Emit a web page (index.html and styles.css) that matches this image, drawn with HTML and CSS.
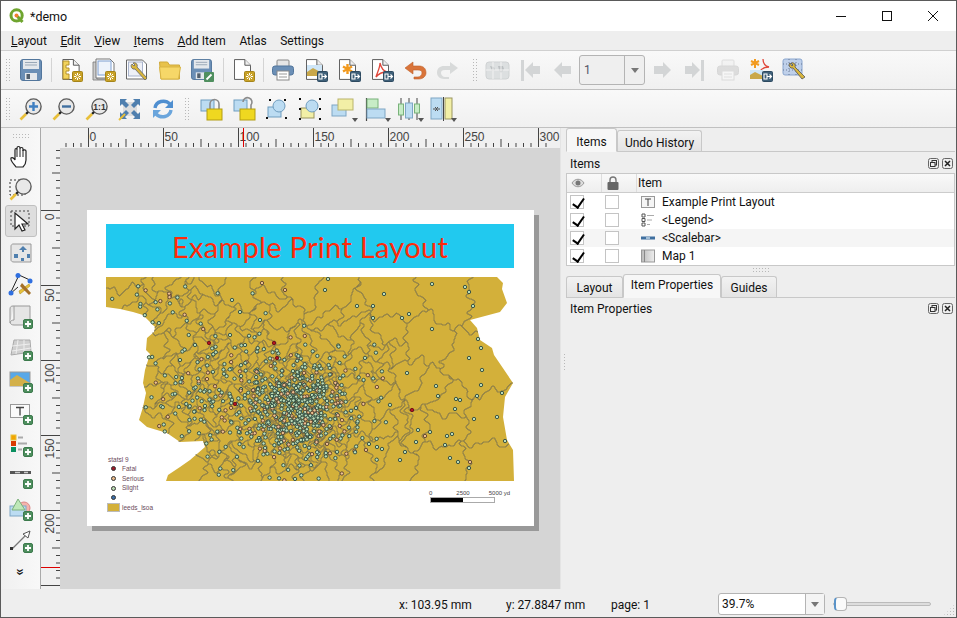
FILE: index.html
```html
<!DOCTYPE html>
<html lang="en">
<head>
    <meta charset="UTF-8">
    <meta name="viewport" content="width=device-width, initial-scale=1.0">
    <title>*demo</title>
    <link rel="stylesheet" href="styles.css">
</head>
<body>
    <svg class="defs" width="0" height="0">
        <symbol id="plus" viewBox="0 0 10 10"><rect x=".5" y=".5" width="9" height="9" rx="1.5" fill="#4f8f5f" stroke="#3c7a4c"/><path d="M5 2v6M2 5h6" stroke="#fff" stroke-width="1.8"/></symbol>
        <symbol id="gear" viewBox="0 0 11 11"><rect x=".5" y=".5" width="10" height="10" rx="1" fill="#c9a227" stroke="#a5841a"/><path d="M5.5 2v7M2 5.5h7M3 3l5 5M8 3l-5 5" stroke="#fff" stroke-width="1"/><circle cx="5.5" cy="5.5" r="1.3" fill="#c9a227"/></symbol>
        <symbol id="out" viewBox="0 0 11 11"><rect x=".5" y=".5" width="10" height="10" rx="1" fill="#3f6079" stroke="#2e4a60"/><path d="M2 3h3v5H2zM5.5 5.5H9M7.5 3.5l2 2-2 2" fill="none" stroke="#fff" stroke-width="1.1"/></symbol>
        <symbol id="mag" viewBox="0 0 24 24"><circle cx="14.5" cy="9.5" r="7.6" fill="#e8e8e8" stroke="#5c5c5c" stroke-width="1.4"/><path d="M9 15 7 17" stroke="#222" stroke-width="2.4"/><path d="M7 17 1.5 22.5" stroke="#e8bf3a" stroke-width="2.6"/></symbol>
        <symbol id="doc" viewBox="0 0 18 22"><path d="M.5.5h11l6 6v15H.5z" fill="#fff" stroke="#555"/><path d="M11.5.5v6h6" fill="#eee" stroke="#555"/></symbol>
        <symbol id="disk" viewBox="0 0 22 22"><rect x=".5" y=".5" width="21" height="21" rx="2.5" fill="#6b8fb6" stroke="#52769c"/><rect x="3" y="1" width="16" height="9" fill="#e4e8ec"/><path d="M5 3.5h12M5 6h12" stroke="#9aa9b8"/><rect x="5" y="14" width="12" height="7" fill="#e4e8ec"/><rect x="6.5" y="15" width="3.5" height="5" fill="#52606e"/></symbol>
        <symbol id="printer" viewBox="0 0 22 22"><rect x="5" y="1" width="12" height="7" rx="1" fill="#e6e6e6" stroke="#888"/><rect x=".5" y="7" width="21" height="9" rx="2.5" fill="#6b8fb6" stroke="#52769c"/><rect x="5" y="12" width="12" height="9" fill="#fff" stroke="#888"/><path d="M7 15h8M7 18h8" stroke="#999"/></symbol>
        <symbol id="boxes" viewBox="0 0 24 24"><rect x="1" y="8" width="14" height="11" fill="#bcdcf2" stroke="#7ea6c4"/><rect x="7" y="2" width="15" height="11" fill="#f2efa6" stroke="#b9b46a"/></symbol>
    </svg>

    <div class="window">
        <header class="titlebar">
            <svg class="logo" viewBox="0 0 16 16" width="16" height="16">
                <circle cx="7.6" cy="7.4" r="5.6" fill="none" stroke="#6fa52f" stroke-width="3"/>
                <path d="M8.5 8.5 13.5 14" stroke="#6fa52f" stroke-width="3"/>
                <circle cx="7.5" cy="7.5" r="2" fill="#ee7f2f"/>
            </svg>
            <span class="doc-name">*demo</span>
            <div class="win-btns">
                <svg viewBox="0 0 12 12" width="12" height="12"><path d="M1 6.5h10" stroke="#111"/></svg>
                <svg viewBox="0 0 12 12" width="12" height="12"><rect x="1.5" y="1.5" width="9" height="9" fill="none" stroke="#111"/></svg>
                <svg viewBox="0 0 12 12" width="12" height="12"><path d="M1 1l10 10M11 1 1 11" stroke="#111"/></svg>
            </div>
        </header>

        <nav class="menubar">
            <span><u>L</u>ayout</span>
            <span><u>E</u>dit</span>
            <span><u>V</u>iew</span>
            <span><u>I</u>tems</span>
            <span><u>A</u>dd Item</span>
            <span>Atlas</span>
            <span>Settings</span>
        </nav>

        <div class="toolbar tb-one">
            <i class="handle"></i>
            <div class="tool"><svg viewBox="0 0 24 24"><use href="#disk" x="1" y="1" width="22" height="22"/></svg></div>
            <i class="sep"></i>
            <div class="tool"><svg viewBox="0 0 24 24"><use href="#doc" x="3" y="1" width="18" height="21"/><path d="M4 3h6v4H7v3h3v3H7v3h3v5H4z" fill="#f2d35c" stroke="#b3912c"/><use href="#gear" x="13" y="13" width="11" height="11"/></svg></div>
            <div class="tool"><svg viewBox="0 0 24 24"><path d="M1 4h4v17h14v1H1z" fill="#ccc" stroke="#777" stroke-width=".8"/><path d="M4 1h14l4 4v15H4z" fill="#fff" stroke="#777"/><rect x="6" y="3" width="13" height="14" fill="#eef3fb" stroke="#7c9ed0"/><use href="#gear" x="13" y="13" width="11" height="11"/></svg></div>
            <div class="tool"><svg viewBox="0 0 24 24"><path d="M1.500 2h16l4 4v15h-20z" fill="#fff" stroke="#666"/><rect x="3.500" y="4" width="14" height="14" fill="#eef0f6" stroke="#a9b4cc"/><path d="M7 6a3 3 0 0 0 3 5l10 11 2-2-10-11a3 3 0 0 0-4-4l2 2-1 1z" fill="#d9b63c" stroke="#666" stroke-width=".8"/></svg></div>
            <div class="tool"><svg viewBox="0 0 24 24"><path d="M1.500 4h8l2 3h10v14H3z" fill="#e8c24b" stroke="#cfa93a"/><path d="M1.500 9h21l-2 12H3z" fill="#f6d768" stroke="#d9b545"/></svg></div>
            <div class="tool"><svg viewBox="0 0 24 24"><use href="#disk" x="0" y="1" width="21" height="21"/><rect x="13" y="14" width="10" height="10" rx="1" fill="#4f8f5f"/><path d="M15.500 21.500l5-5" stroke="#fff" stroke-width="1.800"/></svg></div>
            <i class="sep"></i>
            <div class="tool"><svg viewBox="0 0 24 24"><use href="#doc" x="3" y="1" width="17" height="21"/><use href="#gear" x="13" y="13" width="11" height="11"/></svg></div>
            <i class="sep"></i>
            <div class="tool"><svg viewBox="0 0 24 24"><use href="#printer" x="1" y="1" width="22" height="22"/></svg></div>
            <div class="tool"><svg viewBox="0 0 24 24"><use href="#doc" x="2" y="1" width="17" height="21"/><rect x="3" y="7" width="15" height="11" fill="#cfe6f7"/><path d="M3 18v-4l6-4 9 5v3z" fill="#c9a84a"/><use href="#out" x="13" y="13" width="11" height="11"/></svg></div>
            <div class="tool"><svg viewBox="0 0 24 24"><use href="#doc" x="2" y="1" width="17" height="21"/><path d="M10.500 6v10M6 8.500l9 5M15 8.500l-9 5" stroke="#f29a1f" stroke-width="2.400"/><use href="#out" x="13" y="13" width="11" height="11"/></svg></div>
            <div class="tool"><svg viewBox="0 0 24 24"><use href="#doc" x="2" y="1" width="17" height="21"/><path d="M10 5c1 4 3 8 7 9-4 0-8 1-11 5 1-4 4-9 4-14z" fill="none" stroke="#e0473a" stroke-width="1.300"/><use href="#out" x="13" y="13" width="11" height="11"/></svg></div>
            <div class="tool"><svg viewBox="0 0 24 24"><path d="M10 4 2 10l8 6v-4h5c3 0 4 1 4 3 0 2-2 4-4 4h-4v2h5c4 0 7-3 7-6 0-5-3-7-7-7h-6z" fill="#d9743a" stroke="#c05f28" stroke-width=".6"/></svg></div>
            <div class="tool"><svg viewBox="0 0 24 24"><path d="M14 4l8 6-8 6v-4H9c-3 0-4 1-4 3 0 2 2 4 4 4h4v2H8c-4 0-7-3-7-6 0-5 3-7 7-7h6z" fill="#d8dada"/></svg></div>
            <i class="handle handle-mid"></i>
            <div class="tool"><svg viewBox="0 0 24 24"><rect x="1" y="4" width="23" height="17" rx="3" fill="#dcdfe0" stroke="#cfd2d3"/><path d="M5 8l4 1 1 3-3 1zM13 8l5 0 1 3-3 4-2-3z" fill="#bcc0c2"/><path d="M1 12h23M8 4v17M16 4v17" stroke="#f2f2f2"/></svg></div>
            <div class="tool"><svg viewBox="0 0 24 24" fill="#d3d5d6"><rect x="3" y="2" width="3" height="21"/><path d="M7 12l8-8v4h7v8h-7v4z"/></svg></div>
            <div class="tool"><svg viewBox="0 0 24 24" fill="#d3d5d6"><path d="M3 12l8-8v4h9v8h-9v4z"/></svg></div>
            <div class="page-box"><span class="page-val">1</span><span class="page-drop"><b></b></span></div>
            <div class="tool"><svg viewBox="0 0 24 24" fill="#d3d5d6"><path d="M21 12l-8-8v4H4v8h9v4z"/></svg></div>
            <div class="tool"><svg viewBox="0 0 24 24" fill="#d3d5d6"><rect x="18" y="2" width="3" height="21"/><path d="M17 12l-8-8v4H2v8h7v4z"/></svg></div>
            <div class="tool is-faded"><svg viewBox="0 0 24 24"><use href="#printer" x="1" y="1" width="22" height="22"/></svg></div>
            <div class="tool"><svg viewBox="0 0 24 24"><path d="M6 1v9M2 3l8 4M10 3 2 7" stroke="#f29a1f" stroke-width="2"/><path d="M14 1c0 4 2 7 6 8-4 0-7 1-9 4" fill="none" stroke="#e0473a" stroke-width="1.300"/><rect x="1" y="12" width="13" height="9" fill="#cfe6f7"/><path d="M1 21v-4l5-3 8 4v3z" fill="#c9a84a"/><use href="#out" x="13" y="13" width="11" height="11"/></svg></div>
            <div class="tool"><svg viewBox="0 0 24 24"><rect x="1" y="1" width="19" height="16" rx="2" fill="#bfd0ea" stroke="#8aa6cf"/><path d="M1 6h19M1 12h19M7 1v16M14 1v16" stroke="#5a6b85" stroke-dasharray="1 2" stroke-width=".8"/><path d="M8 5a3 3 0 0 0 3 5l9 11 3-2-10-10a3 3 0 0 0-4-4l2 2-1 1z" fill="#d9b63c" stroke="#555" stroke-width=".8"/></svg></div>
        </div>

        <div class="toolbar tb-two">
            <i class="handle"></i>
            <div class="tool"><svg viewBox="0 0 24 24"><use href="#mag" width="24" height="24"/><path d="M14.500 5v9M10 9.500h9" stroke="#3f7fc1" stroke-width="2.400"/></svg></div>
            <div class="tool"><svg viewBox="0 0 24 24"><use href="#mag" width="24" height="24"/><path d="M10 9.500h9" stroke="#3f6f9f" stroke-width="2.400"/></svg></div>
            <div class="tool"><svg viewBox="0 0 24 24"><use href="#mag" width="24" height="24"/><text x="14.500" y="12.500" class="one-one">1:1</text></svg></div>
            <div class="tool"><svg viewBox="0 0 24 24"><rect x="5" y="5" width="14" height="14" fill="#ddd"/><path d="M2 2h7L7 4l4 4-3 3-4-4-2 2zM22 2h-7l2 2-4 4 3 3 4-4 2 2zM2 22h7l-2-2 4-4-3-3-4 4-2-2zM22 22h-7l2-2-4-4 3-3 4 4 2-2z" fill="#4f7fae"/><path d="M1 23l6-6" stroke="#e8bf3a" stroke-width="2"/></svg></div>
            <div class="tool"><svg viewBox="0 0 24 24" fill="none" stroke-width="3.400"><path d="M4 11c1-7 10-9 15-4" stroke="#4f8fd0"/><path d="M22 3v8h-8z" fill="#4f8fd0"/><path d="M20 13c-1 7-10 9-15 4" stroke="#6aa5dc"/><path d="M2 21v-8h8z" fill="#6aa5dc"/></svg></div>
            <i class="handle handle-two"></i>
            <div class="tool"><svg viewBox="0 0 24 24"><rect x="2" y="3" width="13" height="11" fill="#bcdcf2" stroke="#6f9dbf"/><path d="M11 13V7a4.500 4.500 0 0 1 9 0v6" fill="none" stroke="#8b8b8b" stroke-width="1.600"/><rect x="8" y="12" width="15" height="11" fill="#efd820" stroke="#b39d12"/></svg></div>
            <div class="tool"><svg viewBox="0 0 24 24"><rect x="2" y="3" width="13" height="11" fill="#bcdcf2" stroke="#6f9dbf"/><path d="M11 5a4.500 4.500 0 1 1 8 3v4" fill="none" stroke="#8b8b8b" stroke-width="1.600"/><rect x="8" y="12" width="15" height="11" fill="#efd820" stroke="#b39d12"/></svg></div>
            <div class="tool"><svg viewBox="0 0 24 24"><rect x="3" y="10" width="13" height="10" fill="#bcdcf2" stroke="#6f9dbf"/><circle cx="14" cy="9" r="6" fill="#bcdcf2" stroke="#6f9dbf"/><path d="M1 20h2v2H1zM20 20h2v2h-2zM4 2h2v2H4zM19 2h2v2h-2z" fill="#111"/></svg></div>
            <div class="tool"><svg viewBox="0 0 24 24"><rect x="3" y="11" width="13" height="10" fill="#f2efa6" stroke="#9a9560"/><circle cx="14" cy="9" r="6" fill="#bcdcf2" stroke="#6f9dbf"/><path d="M1 1h2v2H1zM21 1h2v2h-2zM1 11h2v2H1zM21 11h2v2h-2zM1 21h2v2H1zM21 21h2v2h-2z" fill="#111"/></svg></div>
            <div class="tool has-drop"><svg viewBox="0 0 24 24"><use href="#boxes" width="24" height="24"/></svg></div>
            <div class="tool has-drop"><svg viewBox="0 0 24 24"><path d="M2.500 1v23" stroke="#444" stroke-width="1.200"/><rect x="3" y="2" width="11" height="9" fill="#c7ecc6" stroke="#79b27a"/><rect x="3" y="12" width="18" height="9" fill="#bcdcf2" stroke="#7ea6c4"/></svg></div>
            <div class="tool has-drop"><svg viewBox="0 0 24 24"><path d="M4 1v22M12 1v22M20 1v22" stroke="#444"/><rect x="1.500" y="7" width="5" height="11" fill="#c7ecc6" stroke="#79b27a"/><rect x="8.500" y="6" width="7" height="15" fill="#bcdcf2" stroke="#7ea6c4"/><rect x="17.500" y="7" width="5" height="9" fill="#c7ecc6" stroke="#79b27a"/></svg></div>
            <div class="tool has-drop"><svg viewBox="0 0 24 24"><rect x="1" y="1" width="11" height="21" fill="#bcdcf2" stroke="#7ea6c4"/><rect x="15" y="1" width="7" height="21" fill="#f2efa6" stroke="#9a9560"/><path d="M3 12h3M10 12H7M5 10l2 2-2 2M8 10l-2 2 2 2" stroke="#555" fill="none"/><path d="M13.500 0v24" stroke="#444"/></svg></div>
        </div>

        <main class="workspace">
            <aside class="side-tools">
                <i class="handle-h"></i>
                <div class="side-tool"><svg viewBox="0 0 24 24"><path d="M7 22c-2-3-6-6-5-9 1-1 3 0 4 2V5c0-2 2-2 2 0V3c0-2 3-2 3 0v1c0-2 3-2 3 0v2c0-2 3-1 3 0v9c0 3-1 5-3 7z" fill="#fff" stroke="#222" stroke-width="1.200"/><path d="M8 5v7M11 4v8M14 5v7" stroke="#222"/></svg></div>
                <div class="side-tool"><svg viewBox="0 0 24 24"><rect x="1" y="3" width="15" height="15" fill="none" stroke="#333" stroke-dasharray="2 2"/><use href="#mag" x="0" y="0" width="24" height="24"/></svg></div>
                <div class="side-tool is-on"><svg viewBox="0 0 24 24"><rect x="2" y="2" width="18" height="15" fill="none" stroke="#444" stroke-dasharray="2 2"/><path d="M6 4v16l4-4 3 6 3-1-3-6h6z" fill="#fff" stroke="#222" stroke-width="1.200"/></svg></div>
                <div class="side-tool"><svg viewBox="0 0 24 24"><path d="M4 3h18v18H5c-2 0-3-1-3-2V5c0-1 1-2 2-2z" fill="#e6e6e6" stroke="#999"/><path d="M14 5l4 4h-3v2h-2V9h-3zM5 13h4v4H5zM18 13h3v4h-3zM12 17h3v3h-3z" fill="#4f7fae"/></svg></div>
                <div class="side-tool"><svg viewBox="0 0 24 24"><path d="M10 2 1 21l8-7" fill="none" stroke="#222"/><path d="M10 2l13 6" stroke="#222"/><circle cx="9" cy="2.500" r="2.500" fill="#2f6fe0"/><circle cx="21" cy="8" r="2.500" fill="#2f6fe0"/><circle cx="2" cy="20" r="2.500" fill="#2f6fe0"/><path d="M10 18l10-7 1 2-10 8z" fill="#e8c23a" stroke="#b08f22" stroke-width=".6"/><path d="M13 10l9 10-2 2-9-9z" fill="#a4702a"/></svg></div>
                <div class="side-tool"><svg viewBox="0 0 24 24"><path d="M4 1h17v19H5c-2 0-4-1-4-3V4c0-2 1-3 3-3z" fill="#e5e5e5" stroke="#999"/><path d="M5 1v14c-2 0-4 1-4 3" fill="#f4f4f4" stroke="#999"/><use href="#plus" x="14" y="14" width="10" height="10"/></svg></div>
                <div class="side-tool"><svg viewBox="0 0 24 24"><path d="M5 3h16l1 12-20 3z" fill="#cfcfcf" stroke="#aaa"/><path d="M3 9l18-2M3 14l19-3M9 3l-2 14M15 3l0 12" stroke="#eee"/><use href="#plus" x="14" y="14" width="10" height="10"/></svg></div>
                <div class="side-tool"><svg viewBox="0 0 24 24"><rect x="1" y="3" width="20" height="14" fill="#58a8e8" stroke="#999"/><path d="M1 17v-6l7-5 13 8v3z" fill="#d3b04a"/><use href="#plus" x="14" y="14" width="10" height="10"/></svg></div>
                <div class="side-tool"><svg viewBox="0 0 24 24"><rect x="1.500" y="3.500" width="19" height="13" fill="#fafafa" stroke="#999"/><path d="M7 6.500h8M11 6.500v8" stroke="#444" stroke-width="1.300"/><use href="#plus" x="14" y="14" width="10" height="10"/></svg></div>
                <div class="side-tool"><svg viewBox="0 0 24 24"><rect x="2" y="2" width="5" height="5" fill="#f2a400" stroke="#e8c23a"/><rect x="2" y="8" width="5" height="5" fill="#d93a00"/><rect x="2" y="14" width="5" height="5" fill="#0a8f5f"/><path d="M9 4.500h5M9 10.500h9M9 16.500h4" stroke="#aaa" stroke-width="1.800"/><use href="#plus" x="14" y="14" width="10" height="10"/></svg></div>
                <div class="side-tool"><svg viewBox="0 0 24 24"><rect x="1" y="6" width="21" height="3" fill="#555"/><path d="M6 7.500h5M15 7.500h4" stroke="#ccc" stroke-width="1.400"/><use href="#plus" x="14" y="14" width="10" height="10"/></svg></div>
                <div class="side-tool"><svg viewBox="0 0 24 24"><circle cx="15" cy="11" r="6" fill="#f3b4ac" stroke="#d88"/><rect x="1" y="9" width="16" height="10" fill="#bcdcf2" stroke="#7ea6c4"/><path d="M9 2l-6 11h13z" fill="#bfe8b8" stroke="#7cb07c"/><use href="#plus" x="14" y="14" width="10" height="10"/></svg></div>
                <div class="side-tool"><svg viewBox="0 0 24 24"><path d="M3 20 19 4" stroke="#777" stroke-width="1.200"/><rect x="1" y="18" width="3" height="3" fill="#333"/><path d="M14 5l7-3-2 7z" fill="#fff" stroke="#555"/><use href="#plus" x="14" y="14" width="10" height="10"/></svg></div>
                <div class="side-more">»</div>
            </aside>

            <section class="layout-view">
                <div class="ruler-corner"></div>
                <svg class="ruler ruler-h" id="ruler-h" width="500" height="20"></svg>
                <svg class="ruler ruler-v" id="ruler-v" width="19" height="441"></svg>
                <div class="canvas">
                    <div class="page">
                        <div class="banner">Example Print Layout</div>
                        <svg class="map" id="map" width="408" height="204" viewBox="106 277 408 204"></svg>
                        <div class="legend">
                            <div class="lg-title">statsl 9</div>
                            <div class="lg-row"><i class="lg-dot dot-fatal"></i>Fatal</div>
                            <div class="lg-row"><i class="lg-dot dot-serious"></i>Serious</div>
                            <div class="lg-row"><i class="lg-dot dot-slight"></i>Slight</div>
                            <div class="lg-row"><i class="lg-dot dot-other"></i></div>
                            <div class="lg-row lg-area"><i class="lg-swatch"></i>leeds_lsoa</div>
                        </div>
                        <div class="scalebar">
                            <div class="sb-labels"><span>0</span><span>2500</span><span>5000 yd</span></div>
                            <div class="sb-bar"><i></i></div>
                        </div>
                    </div>
                </div>
            </section>

            <aside class="docks">
                <div class="tabs tabs-top">
                    <div class="tab is-active">Items</div>
                    <div class="tab">Undo History</div>
                </div>
                <div class="dock-head">
                    <span>Items</span>
                    <div class="dock-btns">
                        <svg viewBox="0 0 11 11" width="11" height="11"><rect x=".5" y=".5" width="10" height="10" rx="2" fill="none" stroke="#666"/><rect x="4" y="2.500" width="4.500" height="4.500" fill="none" stroke="#333"/><rect x="2.500" y="4.500" width="4.500" height="4" fill="#eee" stroke="#333"/></svg>
                        <svg viewBox="0 0 11 11" width="11" height="11"><rect x=".5" y=".5" width="10" height="10" rx="2" fill="none" stroke="#666"/><path d="M3 3l5 5M8 3 3 8" stroke="#222" stroke-width="1.500"/></svg>
                    </div>
                </div>
                <div class="items-table">
                    <div class="row row-head">
                        <div class="cell"><svg viewBox="0 0 14 10" width="14" height="10"><path d="M1 5c3-5 9-5 12 0-3 5-9 5-12 0z" fill="#ddd" stroke="#999"/><circle cx="7" cy="5" r="2.500" fill="#777"/></svg></div>
                        <div class="cell"><svg viewBox="0 0 14 14" width="14" height="14"><path d="M4 7V4a3 3 0 0 1 6 0v3" fill="none" stroke="#777" stroke-width="1.400"/><rect x="1.500" y="6" width="11" height="8" rx="1" fill="#666"/></svg></div>
                        <div class="cell cell-name">Item</div>
                    </div>
                    <div class="row">
                        <div class="cell"><i class="check is-checked"></i></div>
                        <div class="cell"><i class="check"></i></div>
                        <div class="cell cell-name"><svg class="row-ico" viewBox="0 0 14 14"><rect x=".5" y="1.500" width="13" height="11" fill="#f5f5f5" stroke="#999"/><path d="M4 4h6M7 4v7" stroke="#444"/></svg>Example Print Layout</div>
                    </div>
                    <div class="row">
                        <div class="cell"><i class="check is-checked"></i></div>
                        <div class="cell"><i class="check"></i></div>
                        <div class="cell cell-name"><svg class="row-ico" viewBox="0 0 14 14"><path d="M1 1h3v3H1zM1 5.500h3v3H1zM1 10h3v3H1z" fill="none" stroke="#555"/><path d="M6 2.500h7M6 7h5M6 11.500h3" stroke="#aaa" stroke-width="1.200"/></svg>&lt;Legend&gt;</div>
                    </div>
                    <div class="row row-alt">
                        <div class="cell"><i class="check is-checked"></i></div>
                        <div class="cell"><i class="check"></i></div>
                        <div class="cell cell-name"><svg class="row-ico" viewBox="0 0 14 14"><rect y="5.500" width="14" height="3" fill="#3f6f9f"/><rect x="5" y="6.300" width="4" height="1.400" fill="#cfe0ee"/></svg>&lt;Scalebar&gt;</div>
                    </div>
                    <div class="row">
                        <div class="cell"><i class="check is-checked"></i></div>
                        <div class="cell"><i class="check"></i></div>
                        <div class="cell cell-name"><svg class="row-ico" viewBox="0 0 14 14"><defs><linearGradient id="mapg"><stop offset="0" stop-color="#bbb"/><stop offset="1" stop-color="#eee"/></linearGradient></defs><rect x=".5" y="1" width="13" height="12" fill="url(#mapg)" stroke="#999"/><path d="M3.500 1v12" stroke="#888"/></svg>Map 1</div>
                    </div>
                </div>
                <i class="split-dots"></i>
                <div class="tabs tabs-bottom">
                    <div class="tab">Layout</div>
                    <div class="tab is-active">Item Properties</div>
                    <div class="tab">Guides</div>
                </div>
                <div class="dock-head dock-head-props">
                    <span>Item Properties</span>
                    <div class="dock-btns">
                        <svg viewBox="0 0 11 11" width="11" height="11"><rect x=".5" y=".5" width="10" height="10" rx="2" fill="none" stroke="#666"/><rect x="4" y="2.500" width="4.500" height="4.500" fill="none" stroke="#333"/><rect x="2.500" y="4.500" width="4.500" height="4" fill="#eee" stroke="#333"/></svg>
                        <svg viewBox="0 0 11 11" width="11" height="11"><rect x=".5" y=".5" width="10" height="10" rx="2" fill="none" stroke="#666"/><path d="M3 3l5 5M8 3 3 8" stroke="#222" stroke-width="1.500"/></svg>
                    </div>
                </div>
            </aside>
        </main>

        <footer class="statusbar">
            <span class="st-x">x: 103.95 mm</span>
            <span class="st-y">y: 27.8847 mm</span>
            <span class="st-page">page: 1</span>
            <div class="zoom-box"><span class="zoom-val">39.7%</span><span class="zoom-drop"><b></b></span></div>
            <div class="slider"><i></i></div>
            <i class="grip"></i>
        </footer>
    </div>

    <script src="map.js"></script>
</body>
</html>
```
FILE: styles.css
```css
* {
    box-sizing: border-box;
}

body {
    margin: 0;
    font-family: Roboto, "Noto Sans", sans-serif;
    font-size: 12px;
    color: #111;
    background: #fff;
    overflow: hidden;
}

.defs {
    position: absolute;
}

.window {
    width: 957px;
    height: 618px;
    border: 1px solid #5a5a5a;
    display: flex;
    flex-direction: column;
    background: #eee;
    overflow: hidden;
}

/* title + menu */
.titlebar {
    height: 30px;
    background: #fff;
    display: flex;
    align-items: center;
    padding-left: 8px;
    flex: none;
}

.doc-name {
    margin-left: 5px;
    font-size: 12.5px;
}

.win-btns {
    margin-left: auto;
    display: flex;
    gap: 34px;
    padding-right: 17px;
}

.menubar {
    height: 20px;
    flex: none;
    display: flex;
    align-items: center;
    gap: 13.5px;
    padding-left: 10px;
    background: #eee;
    border-bottom: 1px solid #d0d0d0;
}

/* toolbars */
.toolbar {
    flex: none;
    display: flex;
    align-items: center;
    background: linear-gradient(to bottom, #f9f9f9, #f0f0f0);
    border-bottom: 1px solid #c0c0c0;
}

.tb-one {
    height: 39px;
}

.tb-two {
    height: 38px;
}

.handle {
    width: 6px;
    height: 24px;
    margin: 0 3px 0 4px;
    flex: none;
    background-image: radial-gradient(#b8b8b8 0.7px, transparent 0.8px);
    background-size: 3px 3px;
}

.handle-mid {
    margin: 0 2px 0 8px;
}

.handle-two {
    margin: 0 4px 0 5px;
}

.tool {
    width: 33px;
    height: 30px;
    flex: none;
    display: flex;
    align-items: center;
    justify-content: center;
    position: relative;
}

.tool svg {
    width: 24px;
    height: 24px;
    overflow: visible;
}

.is-faded svg {
    opacity: 0.22;
    filter: grayscale(1);
}

.has-drop::after {
    content: "";
    position: absolute;
    right: 1px;
    bottom: 2px;
    border: 3px solid transparent;
    border-top: 4px solid #555;
    border-bottom: 0;
}

.sep {
    width: 1px;
    height: 24px;
    flex: none;
    margin: 0 2px 0 4px;
    background: #d4d4d4;
}

.one-one {
    font-family: "Liberation Sans", sans-serif;
    font-size: 8.5px;
    font-weight: bold;
    text-anchor: middle;
    fill: #333;
}

.page-box {
    width: 66px;
    height: 30px;
    flex: none;
    display: flex;
    border: 1px solid #b4b4b4;
    border-radius: 3px;
    background: #efefef;
    color: #556;
}

.page-val {
    width: 45px;
    padding-left: 4px;
    line-height: 28px;
    border-right: 1px solid #b4b4b4;
}

.page-drop,
.zoom-drop {
    flex: 1;
    display: flex;
    align-items: center;
    justify-content: center;
}

.page-drop b,
.zoom-drop b {
    border: 4px solid transparent;
    border-top: 5px solid #777;
    border-bottom: 0;
}

/* middle area */
.workspace {
    height: 461px;
    flex: none;
    display: flex;
}

.side-tools {
    width: 40px;
    flex: none;
    border-right: 1px solid #aaa;
    background: linear-gradient(to right, #f0f0f0, #f8f8f8);
    display: flex;
    flex-direction: column;
    align-items: center;
    padding-top: 4px;
}

.handle-h {
    width: 18px;
    height: 6px;
    margin: 1px 0 2px;
    flex: none;
    background-image: radial-gradient(#b8b8b8 0.7px, transparent 0.8px);
    background-size: 3px 3px;
}

.side-tool {
    width: 32px;
    height: 32px;
    flex: none;
    display: flex;
    align-items: center;
    justify-content: center;
    border: 1px solid transparent;
    border-radius: 3px;
}

.side-tool svg {
    width: 24px;
    height: 24px;
    overflow: visible;
}

.side-tool.is-on {
    background: #dedede;
    border-color: #c0c0c0;
}

.side-more {
    margin-top: 7px;
    font-size: 14px;
    line-height: 16px;
    font-weight: bold;
    transform: rotate(90deg);
}

.layout-view {
    width: 519px;
    flex: none;
    display: grid;
    grid-template-columns: 19px 1fr;
    grid-template-rows: 20px 1fr;
    border-bottom: 1px solid #b0b0b0;
    background: #f0f0f0;
}

.ruler {
    display: block;
    background: #f0f0f0;
    font-family: "Liberation Sans", sans-serif;
    font-size: 12px;
}

.ruler text {
    fill: #444;
}

.canvas {
    position: relative;
    overflow: hidden;
    background: #d5d5d5;
}

.page {
    position: absolute;
    left: 27px;
    top: 62px;
    width: 447px;
    height: 316px;
    background: #fff;
    box-shadow: 5px 5px 0 #999;
}

.banner {
    position: absolute;
    left: 19px;
    top: 14px;
    width: 408px;
    height: 44px;
    background: #21c9ef;
    color: #ff2a0a;
    font-family: Lato, sans-serif;
    font-size: 29px;
    line-height: 45px;
    letter-spacing: 0.3px;
    text-align: center;
}

.map {
    position: absolute;
    left: 19px;
    top: 67px;
}

.legend {
    position: absolute;
    left: 21px;
    top: 245px;
    font-family: "Liberation Sans", sans-serif;
    font-size: 6.5px;
    color: #6a4a5a;
}

.lg-title {
    height: 9px;
    line-height: 9px;
}

.lg-row {
    height: 9.700px;
    line-height: 9.700px;
    display: flex;
    align-items: center;
    padding-left: 3px;
}

.lg-dot {
    width: 5px;
    height: 5px;
    border-radius: 50%;
    margin-right: 6px;
    border: 1px solid #333;
}

.dot-fatal {
    background: #a01a2a;
}

.dot-serious {
    background: #e8b888;
}

.dot-slight {
    background: #b8d8b0;
}

.dot-other {
    background: #3a6ea8;
}

.lg-area {
    padding-left: 0;
}

.lg-swatch {
    width: 11px;
    height: 7px;
    margin-right: 3px;
    background: #d3b03a;
    outline: 1px solid #bbb;
}

.scalebar {
    position: absolute;
    left: 342px;
    top: 279px;
    width: 90px;
    font-family: "Liberation Sans", sans-serif;
    font-size: 6px;
    color: #444;
}

.sb-labels {
    display: flex;
    height: 8px;
    line-height: 8px;
    white-space: nowrap;
}

.sb-labels span:nth-child(2) {
    margin-left: 24px;
}

.sb-labels span:nth-child(3) {
    margin-left: 19px;
}

.sb-bar {
    width: 65px;
    height: 6px;
    margin: 0 0 0 1px;
    border: 1px solid #aaa;
    background: #fff;
}

.sb-bar i {
    display: block;
    width: 32px;
    height: 4px;
    background: #000;
}

/* right docks */
.docks {
    flex: 1;
    padding: 1px 1px 0 5px;
    background: #eee;
    border-left: 1px solid #e4e4e4;
    position: relative;
}

.docks::before {
    content: "";
    position: absolute;
    left: 2px;
    top: 225px;
    width: 3px;
    height: 18px;
    background-image: radial-gradient(#b8b8b8 0.7px, transparent 0.8px);
    background-size: 3px 3px;
}

.tabs {
    display: flex;
    align-items: flex-end;
    border-bottom: 1px solid #c8c8c8;
}

.tabs-top {
    height: 23px;
}

.tabs-bottom {
    height: 24px;
}

.tab {
    height: 21px;
    padding: 0;
    line-height: 22px;
    text-align: center;
    border: 1px solid #c8c8c8;
    border-bottom: 0;
    border-radius: 3px 3px 0 0;
    background: linear-gradient(to bottom, #f2f2f2, #e4e4e4);
    white-space: nowrap;
}

.tab.is-active {
    height: 24px;
    margin-bottom: -1px;
    line-height: 25px;
    background: #f7f7f7;
    border-bottom: 1px solid #f7f7f7;
}

.tabs-top .tab {
    width: 85px;
    line-height: 24px;
}

.tabs-top .tab.is-active {
    width: 51px;
    line-height: 27px;
}

.tabs-bottom .tab {
    width: 57px;
}

.tabs-bottom .tab.is-active {
    width: 98px;
    line-height: 21px;
}

.tabs-bottom .tab:last-child {
    width: 56px;
}

.dock-head {
    height: 21px;
    display: flex;
    align-items: center;
    justify-content: space-between;
    padding: 2px 2px 0 4px;
}

.dock-head-props {
    height: 21px;
    padding-top: 0;
}

.dock-btns {
    display: flex;
    gap: 3px;
}

.items-table {
    background: #fff;
    border: 1px solid #c8c8c8;
}

.row {
    display: grid;
    grid-template-columns: 35px 35px 1fr;
    height: 18px;
    align-items: center;
}

.row-head {
    height: 19px;
    background: linear-gradient(to bottom, #f9f9f9, #eeeeee);
    border-bottom: 1px solid #ccc;
}

.row-alt {
    background: #f5f5f5;
}

.cell {
    height: 100%;
    display: flex;
    align-items: center;
    justify-content: flex-start;
    padding-left: 3px;
}

.row-head .cell {
    border-right: 1px solid #ddd;
    padding-left: 4px;
}

.cell-name {
    padding-left: 1px;
    white-space: nowrap;
}

.row-head .cell-name {
    border-right: 0;
    padding-left: 1px;
}

.row-ico {
    width: 14px;
    height: 14px;
    margin: 0 7px 0 3px;
    flex: none;
}

.check {
    width: 14px;
    height: 14px;
    background: #fff;
    border: 1px solid #c4c4c4;
    position: relative;
}

.check.is-checked::after {
    content: "";
    position: absolute;
    left: 4px;
    top: 0;
    width: 5px;
    height: 10px;
    border: solid #000;
    border-width: 0 2px 2px 0;
    transform: rotate(35deg);
}

.split-dots {
    display: block;
    height: 7px;
    width: 18px;
    margin: 1px auto 0;
    background-image: radial-gradient(#b8b8b8 0.7px, transparent 0.8px);
    background-size: 3px 3px;
}

/* status bar */
.statusbar {
    flex: 1;
    position: relative;
    background: #eee;
    display: flex;
    align-items: center;
    padding: 2px 0 0 398px;
    white-space: nowrap;
}

.st-x {
    width: 107px;
    padding-top: 2px;
    flex: none;
}

.st-y {
    width: 105px;
    padding-top: 2px;
    flex: none;
}

.st-page {
    width: 107px;
    padding-top: 2px;
    flex: none;
}

.zoom-box {
    width: 107px;
    height: 22px;
    flex: none;
    display: flex;
    background: #fff;
    border: 1px solid #b4b4b4;
    border-radius: 3px;
}

.zoom-val {
    width: 87px;
    padding-left: 3px;
    line-height: 20px;
    border-right: 1px solid #b4b4b4;
}

.zoom-drop {
    background: #f4f4f4;
}

.slider {
    width: 98px;
    height: 4px;
    margin-left: 8px;
    flex: none;
    position: relative;
    background: #ddd;
    border: 1px solid #bbb;
    border-radius: 2px;
}

.slider i {
    position: absolute;
    left: 0;
    top: -6px;
    width: 13px;
    height: 14px;
    background: #fafafa;
    border: 1px solid #b4b4b4;
    border-left: 2px solid #5a93c8;
    border-radius: 4px;
}

.grip {
    position: absolute;
    right: 1px;
    bottom: 1px;
    width: 12px;
    height: 12px;
    background-image: radial-gradient(#bbb 0.7px, transparent 0.8px);
    background-size: 3px 3px;
    clip-path: polygon(100% 0, 100% 100%, 0 100%);
}
```
FILE: map.js
```js
// rulers and the map, too many shapes to write out by hand
var NS = 'http://www.w3.org/2000/svg';

function add(parent, name, attrs, text) {
    var el = document.createElementNS(NS, name);
    for (var k in attrs) el.setAttribute(k, attrs[k]);
    if (text) el.textContent = text;
    parent.appendChild(el);
    return el;
}

// small seeded random so each load looks the same
var seed = 20190;
function rnd() {
    seed = (seed * 1664525 + 1013904223) % 4294967296;
    return seed / 4294967296;
}
function gauss() {
    return (rnd() + rnd() + rnd() + rnd() - 2) * 1.73;
}

function drawRulerH() {
    var svg = document.getElementById('ruler-h');
    var zero = 28, d = '';
    for (var mm = -15; mm <= 310; mm += 5) {
        var x = zero + mm * 1.5 + 0.5;
        if (x > 492) break;
        var len = mm % 50 === 0 ? 19 : (mm % 25 === 0 ? 8 : 4);
        d += 'M' + x + ' ' + (19 - len) + 'V19';
        if (mm % 50 === 0 && mm >= 0) add(svg, 'text', { x: x + 1, y: 13 }, String(mm));
    }
    add(svg, 'path', { d: d, stroke: '#444', fill: 'none' });
    add(svg, 'path', { d: 'M183.5 0V19', stroke: '#d00' });
}

function drawRulerV() {
    var svg = document.getElementById('ruler-v');
    var zero = 62, d = '';
    for (var mm = -40; mm <= 250; mm += 5) {
        var y = zero + mm * 1.5 + 0.5;
        var len = mm % 50 === 0 ? 19 : (mm % 25 === 0 ? 8 : 4);
        d += 'M' + (19 - len) + ' ' + y + 'H19';
        if (mm % 50 === 0 && mm >= 0 && mm < 250) {
            add(svg, 'text', { transform: 'translate(13 ' + (y + 3) + ') rotate(-90)', 'text-anchor': 'end' }, String(mm));
        }
    }
    add(svg, 'path', { d: d, stroke: '#444', fill: 'none' });
    add(svg, 'path', { d: 'M0 419.5H19', stroke: '#d00' });
}

// outline traced from the picture, in window pixels
var land = [
    [106, 277], [497, 277], [503, 283], [502, 289], [507, 303], [500, 312], [470, 320], [477, 328], [480, 340],
    [492, 348], [494, 355], [513, 383], [505, 397], [503, 417], [507, 440], [513, 450], [514, 481],
    [166, 481], [168, 475], [180, 467], [190, 460], [205, 447], [203, 441], [180, 442], [167, 433], [147, 427],
    [139, 420], [143, 407], [146, 393], [143, 383], [145, 370], [150, 354], [146, 350], [147, 338], [154, 332],
    [155, 327], [143, 315], [133, 312], [120, 309], [106, 307]
];

function inside(x, y) {
    var hit = false;
    for (var i = 0, j = land.length - 1; i < land.length; j = i++) {
        var a = land[i], b = land[j];
        if ((a[1] > y) !== (b[1] > y) && x < (b[0] - a[0]) * (y - a[1]) / (b[1] - a[1]) + a[0]) hit = !hit;
    }
    return hit;
}

function randomPoint(cx, cy, sx, sy) {
    for (var tries = 0; tries < 30; tries++) {
        var x = cx + gauss() * sx, y = cy + gauss() * sy;
        if (inside(x, y)) return [x, y];
    }
    return [cx, cy];
}

// wards: nearest seed on a warped grid, borders where the nearest seed changes
function drawWards(svg) {
    var seeds = [], i;
    for (i = 0; i < 150; i++) seeds.push(randomPoint(298, 408, 24, 24));
    for (i = 0; i < 150; i++) seeds.push(randomPoint(280, 400, 58, 40));
    for (i = 0; i < 55; i++) seeds.push(randomPoint(205, 380, 45, 38));
    for (i = 0; i < 12; i++) seeds.push(randomPoint(170, 300, 36, 14));
    var big = [[150, 290], [200, 285], [270, 295], [300, 285], [330, 300], [390, 300], [450, 290], [490, 295], [420, 345],
        [470, 370], [375, 350], [430, 390], [440, 425], [490, 420], [490, 465], [440, 465], [390, 455], [410, 425],
        [300, 470], [240, 465], [190, 470], [170, 400], [240, 320], [200, 330]];
    seeds = seeds.concat(big);

    function owner(x, y) {
        var wx = x + 3.4 * Math.sin(y / 6.3) + 2.3 * Math.sin(y / 2.3 + x / 11) + 1.2 * Math.sin(y / 1.3);
        var wy = y + 3.4 * Math.sin(x / 5.1) + 2.3 * Math.cos(x / 2.6 + y / 9) + 1.2 * Math.cos(x / 1.4);
        var best = 0, bestD = 1e9;
        for (var s = 0; s < seeds.length; s++) {
            var dx = wx - seeds[s][0], dy = wy - seeds[s][1], dist = dx * dx + dy * dy;
            if (dist < bestD) { bestD = dist; best = s; }
        }
        return best;
    }

    var d = '', prevRow = [], x, y;
    for (y = 277; y < 481; y++) {
        var row = [];
        for (x = 106; x < 514; x++) {
            var id = owner(x, y);
            row.push(id);
            var n = x - 106;
            if (!inside(x + 0.5, y + 0.5)) continue;
            if (n > 0 && row[n - 1] !== id) d += 'M' + x + ' ' + y + 'v1';
            if (y > 277 && prevRow[n] !== id) d += 'M' + x + ' ' + y + 'h1';
        }
        prevRow = row;
    }
    add(svg, 'path', { d: d, fill: 'none', stroke: '#6f6b50', 'stroke-width': 0.8, 'stroke-opacity': 0.85 });
}

function dot(svg, p, kind) {
    var fills = { slight: '#bcdcb8', serious: '#edc090', fatal: '#b3141f' };
    var lines = { slight: '#2c4a40', serious: '#5a3f2c', fatal: '#6a1018' };
    add(svg, 'circle', { cx: p[0], cy: p[1], r: 1.7, fill: fills[kind], stroke: lines[kind], 'stroke-width': 0.9 });
}

function drawMap() {
    var svg = document.getElementById('map'), i;
    add(svg, 'polygon', { points: land.join(' '), fill: '#d3b03a' });
    drawWards(svg);

    var spots = [];
    for (i = 0; i < 360; i++) spots.push(randomPoint(298, 408, 20, 20));
    for (i = 0; i < 280; i++) spots.push(randomPoint(290, 408, 48, 32));
    for (i = 0; i < 150; i++) spots.push(randomPoint(225, 392, 50, 30));
    for (i = 0; i < 26; i++) spots.push(randomPoint(170, 305, 32, 14));
    var kept = [[432, 284], [465, 287], [469, 292], [473, 306], [478, 339], [481, 348], [469, 358], [482, 370], [481, 385],
        [502, 393], [477, 396], [497, 417], [474, 419], [505, 441], [325, 290], [328, 279], [384, 294], [373, 306],
        [357, 306], [409, 314], [402, 318], [373, 318], [432, 329], [407, 373], [436, 386], [438, 396], [456, 399],
        [460, 400], [455, 409], [369, 444], [377, 447], [382, 449], [416, 442], [470, 462], [469, 468], [418, 430],
        [430, 432], [425, 436], [447, 436], [452, 434], [405, 452], [400, 460], [445, 445], [450, 458], [458, 462],
        [232, 300], [240, 312], [262, 283], [285, 290], [260, 320], [230, 335], [245, 345], [195, 345], [180, 360]];
    spots = spots.concat(kept);

    spots.forEach(function (p) {
        dot(svg, p, rnd() < 0.18 ? 'serious' : 'slight');
    });
    [[209, 343], [274, 343], [277, 358], [235, 404], [412, 410]].forEach(function (p) {
        dot(svg, p, 'fatal');
    });
}

drawRulerH();
drawRulerV();
drawMap();
```
